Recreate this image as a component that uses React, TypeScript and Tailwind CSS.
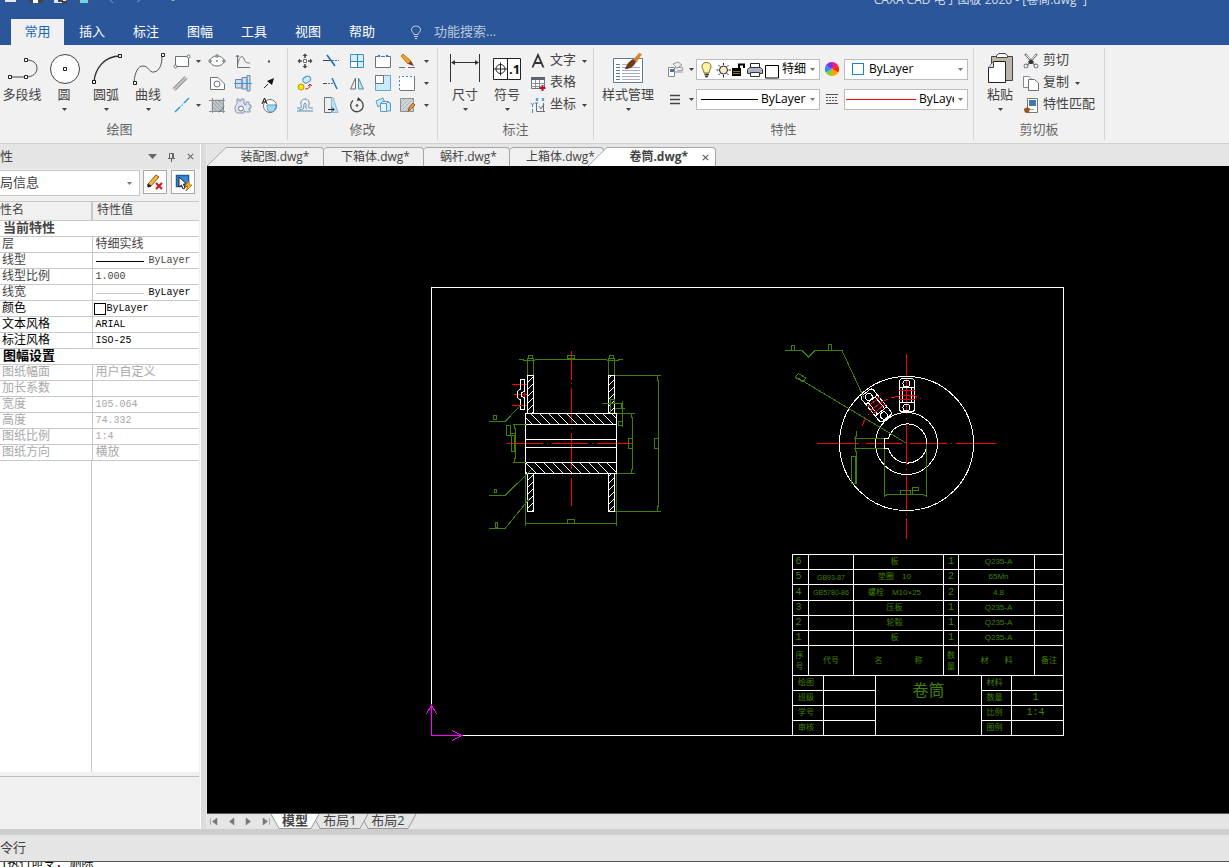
import React from "react";
import { IoCloseSharp } from "react-icons/io5";

const UI_FONT = "font-['Open_Sans','Noto_Sans_CJK_SC',sans-serif]";
const GRID_FONT = "font-['Liberation_Mono','Noto_Sans_CJK_SC',monospace]";

type IconProps = { size?: number; children: React.ReactNode };

function Icon({ size = 20, children }: IconProps) {
  return (
    <svg width={size} height={size} viewBox={`0 0 ${size} ${size}`} fill="none" stroke="#6b7178" className="block shrink-0" aria-hidden="true">
      {children}
    </svg>
  );
}

function Caret({ color = "#444" }: { color?: string }) {
  return (
    <svg width="5" height="3" viewBox="0 0 5 3" className="block shrink-0" aria-hidden="true">
      <path d="M0 0H5L2.500 3Z" fill={color} />
    </svg>
  );
}

/* ---------- title bar ---------- */

const MENUS = ["常用", "插入", "标注", "图幅", "工具", "视图", "帮助"];

function TitleBar() {
  return (
    <header className="shrink-0 bg-[#2b579a] text-white">
      <div className="flex h-[19px] items-start justify-between overflow-hidden">
        <svg width="190" height="8" viewBox="0 0 190 8" aria-hidden="true">
          <path d="M5 0H16V2H5Z" fill="#e8e8e8" />
          <path d="M29 0H43V3H31L29 1Z" fill="#444" />
          <path d="M33 0H38V3H33Z" fill="#fff" />
          <path d="M54 0H66V3H54Z" fill="#dce6f4" />
          <path d="M58 0H63V2H58ZM62 1H67V4H62Z" fill="#454545" />
          <path d="M78 0H90V2H78Z" fill="#555" />
          <path d="M80 0H88V3H80Z" fill="#6fd3f2" />
          <path d="M110 0L113 3M140 0L137 2" stroke="#7f9cc8" />
          <path d="M171 0H175L173 1Z" fill="#ccc" />
        </svg>
        <div className="mr-[142px] -mt-2.5 text-xs leading-5 text-[#d5deeb]">CAXA CAD 电子图板 2020 - [卷筒.dwg*]</div>
      </div>
      <nav className="flex h-[26px] items-stretch pl-[11px] text-[13px]">
        {MENUS.map((menu, i) => (
          <button
            key={menu}
            className={i === 0 ? "mr-px w-[53px] bg-[#f1f1f1] text-[#1b67bf]" : "w-[54px]"}
          >
            {menu}
          </button>
        ))}
        <label className="ml-[21px] flex items-center gap-3 text-[#b9c6dd]">
          <svg width="12" height="14" viewBox="0 0 12 14" fill="none" stroke="#c6d1e4" aria-hidden="true">
            <path d="M4 9.500C4 8 1.500 7 1.500 4.800C1.500 2.400 3.500 1 6 1S10.500 2.400 10.500 4.800C10.500 7 8 8 8 9.500ZM4 11.500H8M5 13.500H7" />
          </svg>
          <input aria-label="功能搜索" placeholder="功能搜索..." className="w-32 bg-transparent outline-none placeholder:text-[#b9c6dd]" />
        </label>
      </nav>
    </header>
  );
}

/* ---------- ribbon ---------- */

type BigProps = { label: string; width?: string; arrow?: boolean; children: React.ReactNode };

function BigButton({ label, width = "w-[42px]", arrow = true, children }: BigProps) {
  return (
    <button className={`flex shrink-0 flex-col items-center ${width}`}>
      {children}
      <span className="-mt-0.5 mb-1.5 whitespace-nowrap text-[13px] leading-4">{label}</span>
      {arrow && <Caret />}
    </button>
  );
}

function SmallButton({ label, width = "w-[26px]", children }: { label: string; width?: string; children: React.ReactNode }) {
  return (
    <button aria-label={label} className={`flex h-[22px] items-center justify-center ${width}`}>
      {children}
    </button>
  );
}

function TextButton({ label, arrow, children }: { label: string; arrow?: boolean; children: React.ReactNode }) {
  return (
    <button className="flex h-[22px] items-center whitespace-nowrap text-[13px]">
      {children}
      <span className="mr-1.5 ml-0.5 pb-0.5">{label}</span>
      {arrow && <Caret />}
    </button>
  );
}

type GroupProps = { title: string; width: string; titleClass?: string; children: React.ReactNode };

function Group({ title, width, titleClass = "", children }: GroupProps) {
  return (
    <section className={`my-[3px] flex shrink-0 flex-col border-r border-[#d4d4d4] ${width}`}>
      <div className="flex h-[71px] pt-0.5">{children}</div>
      <h2 className={`text-center text-[13px] leading-5 text-[#666] ${titleClass}`}>{title}</h2>
    </section>
  );
}

function DrawGroup() {
  return (
    <Group title="绘图" width="w-72" titleClass="pr-12">
      <div className="w-px" />
      <BigButton label="多段线" arrow={false}>
        <Icon size={38}>
          <path d="M8 27H23C30 27 34 23 34 18.500C34 13 30 10 23 10" stroke="#444" />
          <path d="M5.500 25.500h3v3h-3zM21.500 25.500h3v3h-3zM21.500 8.500h3v3h-3z" fill="#fff" stroke="#222" />
        </Icon>
      </BigButton>
      <BigButton label="圆">
        <Icon size={38}>
          <circle cx="20" cy="19" r="14.500" fill="#fff" stroke="#444" />
          <path d="M18.500 17.500h3v3h-3z" fill="#fff" stroke="#222" />
        </Icon>
      </BigButton>
      <BigButton label="圆弧">
        <Icon size={38}>
          <path d="M7 32C8 18 18 6 33 6" stroke="#333" strokeWidth="1.300" />
          <path d="M5.500 30.500h3v3h-3zM31.500 4.500h3v3h-3z" fill="#fff" stroke="#111" />
        </Icon>
      </BigButton>
      <BigButton label="曲线">
        <Icon size={38}>
          <path d="M5 32C6 22 9 16 14 16C20 16 20 23 25 22C31 21 33 14 33 6" stroke="#555" />
          <path d="M4.500 31.500h3v3h-3zM32.500 3.500h3v3h-3z" fill="#fff" stroke="#222" />
        </Icon>
      </BigButton>
      <div className="grid grid-cols-[34px_26px_26px_26px] content-start pl-px">
        <SmallButton label="矩形" width="w-8 gap-1">
          <Icon>
            <path d="M3.500 5.500H16.500V15.500H3.500Z" fill="#fff" />
            <circle cx="16.500" cy="5.500" r="1.500" fill="#fff" />
            <circle cx="3.500" cy="15.500" r="1.500" fill="#fff" />
          </Icon>
          <Caret />
        </SmallButton>
        <SmallButton label="椭圆">
          <Icon>
            <ellipse cx="10" cy="10" rx="7" ry="5" fill="#fff" />
            <path d="M2 9h2v2H2zM16 9h2v2h-2zM9 4h2v2H9z" fill="#fff" />
            <circle cx="10" cy="10" r=".6" />
          </Icon>
        </SmallButton>
        <SmallButton label="公式曲线">
          <Icon>
            <path d="M4.500 4V16.500H17M3 6L4.500 4L6 6M4.500 15C6 4 10 4 11 8C12 12 15 12 17 12" />
          </Icon>
        </SmallButton>
        <SmallButton label="点">
          <Icon>
            <path d="M9 9.500h2v2H9z" fill="#444" stroke="none" />
          </Icon>
        </SmallButton>
        <SmallButton label="平行线" width="w-5">
          <Icon>
            <path d="M3 15.500L15 3.500M5 17.500L17 5.500" stroke="#555" />
            <path d="M4 16.500L16 4.500" stroke="#999" />
          </Icon>
        </SmallButton>
        <SmallButton label="多边形">
          <Icon>
            <path d="M3.500 4.500H11L17.500 11V16.500H3.500Z" fill="#fff" />
            <circle cx="10" cy="11" r="3" />
          </Icon>
        </SmallButton>
        <SmallButton label="轴">
          <Icon>
            <path d="M2.500 6.500H9V15H2.500ZM9 4.500H14V16H9ZM14 2.500H17V18H14Z" fill="#cfdcec" stroke="#7088a5" />
            <path d="M1 10.500H19" stroke="#2c9be8" />
          </Icon>
        </SmallButton>
        <SmallButton label="箭头">
          <Icon>
            <path d="M5 15L9 11" stroke="#222" />
            <path d="M15 5L13 12L8 8Z" fill="#111" stroke="none" />
          </Icon>
        </SmallButton>
        <SmallButton label="构造线" width="w-8 gap-1">
          <Icon>
            <path d="M3 17L8 12M10 10.500L10.500 10M12 8L17 3" stroke="#1c9ad6" strokeWidth="1.400" />
            <path d="M8 12L12 8" stroke="#8fcdea" />
          </Icon>
          <Caret />
        </SmallButton>
        <SmallButton label="填充">
          <Icon>
            <path d="M4.500 4.500H16.500V16.500H4.500Z" fill="#bfc3c8" stroke="none" />
            <path d="M2 5.500H18M2 16.500H18M5.500 3V18M16.500 3V18" stroke="#8b9096" />
            <path d="M6 8L14 16M6 12L10 16M8 6L16 14M12 6L16 10" stroke="#a2a7ac" />
            <path d="M11 17C14 16 16 14 17 11" />
          </Icon>
        </SmallButton>
        <SmallButton label="齿轮">
          <Icon>
            <path d="M4 9V4H6V6H8V4H11V9L13 10V7H16V10H18V13H16V15H17V17H13L11 16V18H4C3 18 2 15 2 13S3 10 4 9Z" fill="#dfe5ee" stroke="#8496ac" />
            <circle cx="8" cy="13.500" r="2.500" fill="#fff" />
          </Icon>
        </SmallButton>
        <SmallButton label="图块">
          <Icon>
            <circle cx="11" cy="11" r="6.500" fill="#fff" />
            <path d="M8 10H17C17 15 14 17 12 17C9 17 8 14 8 10Z" fill="#9fdcf7" stroke="#5f8fb0" />
            <path d="M3 9L5.500 3L8 9M4 7H7" stroke="#111" />
          </Icon>
        </SmallButton>
      </div>
    </Group>
  );
}

function ModifyGroup() {
  return (
    <Group title="修改" width="w-[150px]">
      <div className="grid grid-cols-[26px_26px_26px_26px_38px] content-start pl-1">
        <SmallButton label="平移">
          <Icon>
            <path d="M8.500 8.500h3v3h-3z" fill="#fff" />
            <path d="M10 4V7M10 13V16M4 10H7M13 10H16" stroke="#444" strokeWidth="1.500" />
            <path d="M7.500 5L10 2.500L12.500 5ZM7.500 15L10 17.500L12.500 15ZM5 7.500L2.500 10L5 12.500ZM15 7.500L17.500 10L15 12.500Z" fill="#444" stroke="none" />
          </Icon>
        </SmallButton>
        <SmallButton label="裁剪">
          <Icon>
            <path d="M2 9.500H9" stroke="#444" />
            <path d="M11 9.500H18" stroke="#3a7fc4" strokeDasharray="2 1" />
            <path d="M6 4L14 15" stroke="#1f6fb5" strokeWidth="1.600" />
          </Icon>
        </SmallButton>
        <SmallButton label="阵列">
          <Icon>
            <path d="M3.500 3.500H16.500V16.500H3.500Z" fill="#d3eefb" stroke="#4a8fb8" />
            <path d="M10 10.500H4V16H10Z" fill="#fff" stroke="none" />
            <path d="M10.500 3V17M3 10.500H17" stroke="#2f86b8" />
          </Icon>
        </SmallButton>
        <SmallButton label="打断">
          <Icon>
            <path d="M5 5.500H2.500V16.500H17.500V5.500H15M8 5.500H12" fill="#fff" />
            <path d="M5 4h2v2H5zM13 4h2v2h-2z" fill="#1b7fd0" stroke="none" />
          </Icon>
        </SmallButton>
        <SmallButton label="删除" width="w-[34px] gap-[7px]">
          <Icon>
            <path d="M4 5L6 3L14 10L11 13Z" fill="#f0a030" stroke="#c87a10" />
            <path d="M11 13L14 10L17 15Z" fill="#6b3a2a" stroke="none" />
            <path d="M2 16.500H8M11 16.500H18" />
          </Icon>
          <Caret />
        </SmallButton>
        <SmallButton label="平移复制">
          <Icon>
            <rect x="8" y="3.500" width="8" height="6" rx="3" fill="#c9ebfb" stroke="#4a90bd" transform="rotate(-30 12 7)" />
            <circle cx="6" cy="14" r="3" fill="#ffe600" stroke="#b09a00" />
            <path d="M10 16C13 16 15 15 15 12M13 13L15 11L17 13" stroke="#b33" />
          </Icon>
        </SmallButton>
        <SmallButton label="延伸">
          <Icon>
            <path d="M2 10.500H6" stroke="#444" />
            <path d="M7 10.500H13" stroke="#2c7fd0" strokeDasharray="2 1" />
            <path d="M11 5L16 16" stroke="#1f6fb5" strokeWidth="1.400" />
          </Icon>
        </SmallButton>
        <SmallButton label="镜像">
          <Icon>
            <path d="M8.500 5V16H3.500Z" fill="#eee" />
            <path d="M11.500 5V16H16.500Z" fill="#bfe3f5" stroke="#5b8ba5" />
          </Icon>
        </SmallButton>
        <SmallButton label="缩放">
          <Icon>
            <path d="M2.500 2.500H17.500V17.500H2.500Z" fill="#c9ebfb" stroke="#6ca6c4" />
            <path d="M2.500 2.500H10.500V10.500H2.500Z" fill="#fff" />
          </Icon>
        </SmallButton>
        <SmallButton label="拉伸" width="w-[34px] gap-[7px]">
          <Icon>
            <path d="M3 3H17V17H3Z" fill="#fff" stroke="none" />
            <path d="M17.500 3V17.500H3" stroke="#777" />
            <path d="M2.500 17V3.500H17" stroke="#2d8fd5" strokeDasharray="2 2" />
          </Icon>
          <Caret />
        </SmallButton>
        <SmallButton label="等距线">
          <Icon>
            <path d="M2 13H5C8 13 5 9 6 7C7 3 13 3 14 7C15 9 12 13 15 13H18" stroke="#6b8aa8" />
            <path d="M2 16H18M4 15C12 15 7 9 10 8C13 9 9 13 12 14" stroke="#4f90b8" />
          </Icon>
        </SmallButton>
        <SmallButton label="拔模">
          <Icon>
            <path d="M3.500 2.500H10.500V17.500H3.500Z" fill="#eee" />
            <path d="M10.500 2.500H12L17 17.500H10.500Z" fill="#b9e2f6" stroke="#8fb9cd" />
            <path d="M7 14.500H13M11 12.500L13 14.500L11 16.500" stroke="#222" />
          </Icon>
        </SmallButton>
        <SmallButton label="旋转">
          <Icon>
            <path d="M12 4.500A6.300 6.300 0 1 1 6 5.500" stroke="#444" strokeWidth="1.300" />
            <path d="M11 2L14 5L10 6Z" fill="#333" stroke="none" />
            <circle cx="10" cy="10.500" r="1" fill="#333" />
          </Icon>
        </SmallButton>
        <SmallButton label="旋转复制">
          <Icon>
            <path d="M3 6L10 3L12 8L5 12Z" fill="#c9ebfb" stroke="#5b9dc0" />
            <path d="M12 6.500L17.500 8V16H12Z" fill="#c9ebfb" stroke="#5b9dc0" />
            <path d="M7.500 8.500H13.500V16.500H7.500ZM7.500 8.500L9.500 6.500H15.500L13.500 8.500" fill="#e6f6fd" stroke="#5b9dc0" />
          </Icon>
        </SmallButton>
        <SmallButton label="编辑填充" width="w-[34px] gap-[7px]">
          <Icon>
            <path d="M3.500 3.500H16.500V16.500H3.500Z" fill="#d2d5d8" stroke="#8b9096" />
            <path d="M4 8L8 4M4 12L12 4M4 16L16 4M8 16L16 8" stroke="#b0b4b9" />
            <path d="M16 8L18 10L13 15L11 16L12 13Z" fill="#f0a030" stroke="#8a5a20" />
          </Icon>
          <Caret />
        </SmallButton>
      </div>
    </Group>
  );
}

function AnnotateGroup() {
  return (
    <Group title="标注" width="w-[156px]">
      <div className="w-1.5" />
      <BigButton label="尺寸">
        <Icon size={38}>
          <path d="M4.500 4V32M33.500 4V32" stroke="#333" />
          <path d="M6 12.500H32" stroke="#333" />
          <path d="M5 12.500L9 10V15ZM33 12.500L29 10V15Z" fill="#333" stroke="none" />
        </Icon>
      </BigButton>
      <BigButton label="符号">
        <Icon size={38}>
          <path d="M5.500 8.500H32.500V29.500H5.500ZM19.500 8.500V29.500" fill="#fff" stroke="#222" />
          <circle cx="12.500" cy="19" r="4.500" stroke="#222" />
          <path d="M6 19H19M12.500 12.500V25.500" stroke="#222" />
          <text x="21" y="24" fontSize="13" fontWeight="700" fill="#111" stroke="none">.1</text>
        </Icon>
      </BigButton>
      <div className="flex flex-col">
        <TextButton label="文字" arrow>
          <Icon>
            <path d="M4.500 16.500L10 4L15.500 16.500M6.500 12H13.500" stroke="#333" strokeWidth="1.800" />
          </Icon>
        </TextButton>
        <TextButton label="表格">
          <Icon>
            <path d="M3.500 4.500H16.500V15.500H3.500Z" fill="#fff" />
            <path d="M3 4H17V7H3Z" fill="#5a636e" stroke="none" />
            <path d="M3 10.500H17M3 13.500H13M7.500 7V15M11.500 7V15" stroke="#8a929b" />
            <path d="M14.500 12V18M11.500 15H17.500" stroke="#b3121f" strokeWidth="2" />
          </Icon>
        </TextButton>
        <TextButton label="坐标" arrow>
          <Icon>
            <path d="M8.500 8V16.500H17M7 8H10M11 11L13 14L16 9M15.500 8V17" />
            <path d="M8 3L10 6M10 3L8 6M14 3L16 6M16 3L14 6M3 8L4.500 10V12M6 8L4.500 10M4.500 14V18" stroke="#3c8cd0" />
          </Icon>
        </TextButton>
      </div>
    </Group>
  );
}

function Combo({ label, value, children }: { label: string; value: string; children?: React.ReactNode }) {
  return (
    <label className="flex h-[21px] w-[124px] items-center border border-[#bcbcbc] bg-white text-xs text-black">
      {children}
      <select aria-label={label} className="min-w-0 flex-1 appearance-none overflow-hidden bg-transparent pl-[3px] outline-none">
        <option>{value}</option>
      </select>
      <span className="px-1">
        <Caret color="#777" />
      </span>
    </label>
  );
}

function PropertyGroup() {
  return (
    <Group title="特性" width="w-[380px]">
      <BigButton label="样式管理" width="w-[68px]">
        <Icon size={38}>
          <path d="M4.500 8.500H33.500V32.500H4.500Z" fill="#fff" stroke="#5a7d9e" />
          <path d="M7 14.500H11M7 17.500H11M7 20.500H11M7 23.500H11M7 26.500H11M7 29.500H11" stroke="#5c7fa0" />
          <path d="M13 14.500H18M13 17.500H31M13 20.500H31M13 23.500H31M13 26.500H31M13 29.500H31" stroke="#a9a9cf" />
          <path d="M24 10L30 3L33 4L27 13Z" fill="#d9822b" stroke="none" />
          <path d="M16 19C18 13 21 11 24 9L27 12C24 18 20 19 16 19Z" fill="#6b3f1d" stroke="none" />
        </Icon>
      </BigButton>
      <div className="flex flex-col gap-2 pt-2">
        <div className="flex items-center">
          <SmallButton label="图层" width="w-[34px] gap-1">
            <Icon>
              <path d="M8 5L13 3L17 6L12 9ZM10 9L17 8L18 11L12 12M10 13H18" fill="#eee" stroke="#999" />
              <path d="M3.500 8.500H9.500V17.500H3.500Z" fill="#fff" stroke="#888" />
              <path d="M5 10H9V13H5Z" fill="#3c78b4" stroke="none" />
            </Icon>
            <Caret />
          </SmallButton>
          <Combo label="当前图层" value="特细实线">
            <svg width="82" height="19" viewBox="0 0 82 19" fill="none" className="block shrink-0" aria-hidden="true">
              <path d="M7 13C7 10 5 9 5 6.500C5 4 7 2.500 9.500 2.500S14 4 14 6.500C14 9 12 10 12 13Z" fill="#fff3a8" stroke="#8a6a10" />
              <path d="M7.500 14.500H12M8 16.500H11" stroke="#333" strokeWidth="1.500" />
              <circle cx="26.500" cy="10" r="4" fill="#ffeccb" stroke="#222" />
              <path d="M26.500 3V5M26.500 15V17.500M19.500 10H21.500M31.500 10H34M21.500 5L23 6.500M31.500 5L30 6.500M21.500 15L23 13.500M31.500 15L30 13.500" stroke="#222" />
              <path d="M35 8H44V16H35Z" fill="#000" />
              <path d="M36 11.500H43M36 13.500H43" stroke="#8a7a00" />
              <path d="M42 8V4.500H47V8" stroke="#000" strokeWidth="2" />
              <path d="M53.500 8.500V3.500H62.500V8.500" fill="#fff" stroke="#222" />
              <path d="M52.500 7.500H63.500L65.500 9.500V13.500H50.500V9.500Z" fill="#aab4c4" stroke="#333" />
              <path d="M53.500 12.500H62.500V16.500H53.500Z" fill="#fff" stroke="#333" />
              <path d="M68.500 5.500H81.500V18H68.500Z" fill="#fff" stroke="#000" />
            </svg>
          </Combo>
        </div>
        <div className="flex items-center">
          <SmallButton label="线型管理" width="w-[34px] gap-1">
            <Icon>
              <path d="M5 6.500H15M5 10.500H15M5 14.500H15" stroke="#444" strokeWidth="1.500" />
            </Icon>
            <Caret />
          </SmallButton>
          <Combo label="线型" value="ByLayer">
            <span className="ml-1 h-px w-[57px] shrink-0 bg-black" />
          </Combo>
        </div>
      </div>
      <div className="flex flex-col gap-2 pt-2">
        <div className="flex items-center">
          <SmallButton label="颜色管理" width="w-6">
            <Icon size={14}>
              <g stroke="none">
                <path d="M7 7V0A7 7 0 0 1 13.100 3.500Z" fill="#e0218a" />
                <path d="M7 7L13.100 3.500A7 7 0 0 1 13.100 10.500Z" fill="#ff2a00" />
                <path d="M7 7L13.100 10.500A7 7 0 0 1 7 14Z" fill="#ffa500" />
                <path d="M7 7V14A7 7 0 0 1 0.900 10.500Z" fill="#8ed11f" />
                <path d="M7 7L0.900 10.500A7 7 0 0 1 0.900 3.500Z" fill="#2f8cff" />
                <path d="M7 7L0.900 3.500A7 7 0 0 1 7 0Z" fill="#8a2be2" />
              </g>
            </Icon>
          </SmallButton>
          <Combo label="颜色" value="ByLayer">
            <span className="mr-0.5 ml-[7px] size-3 shrink-0 border border-[#1b7fd8] bg-white" />
          </Combo>
        </div>
        <div className="flex items-center">
          <SmallButton label="线宽管理" width="w-6">
            <Icon size={14}>
              <path d="M1 2.500H13M1 11.500H13" stroke="#555" />
              <path d="M1 5.500H13M1 8.500H13" stroke="#555" strokeDasharray="2 1" />
            </Icon>
          </SmallButton>
          <Combo label="线宽" value="ByLayer">
            <span className="ml-px h-px w-[70px] shrink-0 bg-[#f00]" />
          </Combo>
        </div>
      </div>
    </Group>
  );
}

function ClipboardGroup() {
  return (
    <Group title="剪切板" width="w-[131px]">
      <div className="w-[5px]" />
      <BigButton label="粘贴">
        <Icon size={38}>
          <path d="M10.500 6.500H31.500V30.500H10.500Z" fill="#bcb4a8" stroke="#444" />
          <path d="M15.500 7.500V5.500L18 3.500H24L26.500 5.500V7.500Z" fill="#fff" stroke="#444" />
          <path d="M12.500 11.500H24.500V32.500H7.500V17.500Z" fill="#fff" stroke="#222" />
          <path d="M12.500 11.500V17.500H7.500" fill="#cfe3f5" stroke="#444" />
        </Icon>
      </BigButton>
      <div className="flex flex-col">
        <TextButton label="剪切">
          <Icon>
            <path d="M4 3L14 14M16 3L6 14" stroke="#777" strokeWidth="2" />
            <path d="M5 4L14 13M15 4L6 13" stroke="#eee" />
            <path d="M7 11L10 8L13 11L11 13H9Z" fill="#333" stroke="none" />
            <circle cx="5" cy="15" r="2" />
            <circle cx="15" cy="15" r="2" />
          </Icon>
        </TextButton>
        <TextButton label="复制" arrow>
          <Icon>
            <path d="M2.500 3.500H8L10.500 6V14.500H2.500Z" fill="#fff" stroke="#888" />
            <path d="M7.500 6.500H13.500L17.500 10V17.500H7.500Z" fill="#fff" />
          </Icon>
        </TextButton>
        <TextButton label="特性匹配">
          <Icon>
            <path d="M6.500 3.500H16.500V17.500H6.500Z" fill="#fff" stroke="#777" />
            <path d="M8 5H15V11H8Z" fill="#4279b5" stroke="none" />
            <path d="M9 14.500H13" stroke="#999" />
            <path d="M3 14C5 12 8 12 9 14L8 17C6 19 3 18 3 14Z" fill="#9a5318" stroke="none" />
          </Icon>
        </TextButton>
      </div>
    </Group>
  );
}

/* ---------- property panel ---------- */

type Row = { name: string; value?: React.ReactNode; tone: string; head?: boolean };

const DIM = "text-[#444]";
const ON = "text-black";
const OFF = "text-[#a8a8a8]";

const ROWS: Row[] = [
  { name: "当前特性", tone: DIM, head: true },
  { name: "层", value: "特细实线", tone: DIM },
  { name: "线型", value: <LineSample line="bg-black" />, tone: DIM },
  { name: "线型比例", value: "1.000", tone: DIM },
  { name: "线宽", value: <LineSample line="bg-[#c8c8c8]" text="text-black" />, tone: DIM },
  {
    name: "颜色",
    value: (
      <span className="-ml-0.5 flex items-center gap-px">
        <i className="size-3 border border-black" />
        ByLayer
      </span>
    ),
    tone: ON,
  },
  { name: "文本风格", value: "ARIAL", tone: ON },
  { name: "标注风格", value: "ISO-25", tone: ON },
  { name: "图幅设置", tone: ON, head: true },
  { name: "图纸幅面", value: "用户自定义", tone: OFF },
  { name: "加长系数", value: "", tone: OFF },
  { name: "宽度", value: "105.064", tone: OFF },
  { name: "高度", value: "74.332", tone: OFF },
  { name: "图纸比例", value: "1:4", tone: OFF },
  { name: "图纸方向", value: "横放", tone: OFF },
];

function LineSample({ line, text = "" }: { line: string; text?: string }) {
  return (
    <span className={`flex items-center gap-[5px] ${text}`}>
      <i className={`h-px w-12 ${line}`} />
      ByLayer
    </span>
  );
}

function PropertyPanel() {
  return (
    <aside className="flex w-[201px] shrink-0 flex-col border-r border-white bg-[#f0f0f0]">
      <div className="flex h-[25px] shrink-0 items-center bg-[#e5e5e5] text-[13px] text-[#444]">
        <h2 className="flex-1">性</h2>
        <button aria-label="菜单" className="mr-[10px]">
          <svg width="9" height="5" viewBox="0 0 9 5" className="block" aria-hidden="true">
            <path d="M0 0H9L4.500 5Z" fill="#666" />
          </svg>
        </button>
        <button aria-label="固定" className="mr-[9px]">
          <svg width="9" height="10" viewBox="0 0 9 10" fill="none" stroke="#666" className="block" aria-hidden="true">
            <path d="M2.500 6V1.500H6.500V6M5.500 1V6M1 6.500H8M4.500 7V10" />
          </svg>
        </button>
        <button aria-label="关闭" className="mr-1 text-[11px] text-[#666]">
          <IoCloseSharp />
        </button>
      </div>
      <div className="flex h-8 shrink-0 items-start gap-[3px] pt-px">
        <label className="flex h-[26px] w-[140px] items-center border border-l-0 border-[#c6c6c6] bg-white text-[13px] text-[#444]">
          <select aria-label="选择" className="min-w-0 flex-1 appearance-none bg-transparent outline-none">
            <option>局信息</option>
          </select>
          <span className="px-[7px]">
            <Caret color="#777" />
          </span>
        </label>
        <button aria-label="清除选择" className="flex size-6 items-center justify-center border border-[#a8a8a8] bg-white">
          <Icon>
            <path d="M3 12L11 3L14 5L6 14L3 15Z" fill="#f5b83d" stroke="#8a5a10" />
            <path d="M3 12L6 14L3 15Z" fill="#222" stroke="#222" />
            <path d="M11 11L17 17M17 11L11 17" stroke="#d01818" strokeWidth="2" />
          </Icon>
        </button>
        <button aria-label="快速选择" className="ml-px flex size-6 items-center justify-center border border-[#a8a8a8] bg-white">
          <Icon>
            <path d="M3.500 3.500H15.500V14.500H3.500Z" fill="#3c8ad8" stroke="#1f5c9c" strokeWidth="1.500" />
            <path d="M6 5V15L8.500 13L10 17L12 16L10.500 12H13.500Z" fill="#fff" stroke="#222" />
            <path d="M16 9L12 14H15L13 19L19 13H16Z" fill="#ffc02e" stroke="#c87a10" />
          </Icon>
        </button>
      </div>
      <div className={`mr-px flex min-h-0 flex-1 flex-col overflow-hidden border-t border-[#c8c8c8] bg-white text-xs ${GRID_FONT}`}>
        <table className="w-full table-fixed border-collapse leading-none">
          <thead>
            <tr className="h-[18px] border-b border-[#c8c8c8] bg-[#f0f0f0] text-left text-[#444]">
              <th className="w-[92px] border-r-2 border-[#c8c8c8] p-0 font-normal">性名</th>
              <th className="p-0 pl-1 font-normal">特性值</th>
            </tr>
          </thead>
          <tbody>
            {ROWS.map((row) => (
              <tr key={row.name} className={`h-4 border-b border-[#c8c8c8] ${row.tone}`}>
                {row.head ? (
                  <th colSpan={2} className="p-0 pl-[3px] text-left text-[13px] leading-none font-bold">
                    {row.name}
                  </th>
                ) : (
                  <>
                    <td className="border-r border-[#c8c8c8] p-0 pt-0.5 pl-0.5 whitespace-nowrap">{row.name}</td>
                    <td className="p-0 pt-0.5 pl-[3px] whitespace-nowrap">
                      {typeof row.value === "string" && /[一-龥]/.test(row.value) ? row.value : <span className="block text-[10px] leading-3">{row.value}</span>}
                    </td>
                  </>
                )}
              </tr>
            ))}
          </tbody>
        </table>
        <div className="w-[92px] flex-1 border-r border-[#c8c8c8]" />
      </div>
      <div className="mt-1 mr-px h-[53px] shrink-0 border-t border-[#bdbdbd]" />
    </aside>
  );
}

/* ---------- drawing ---------- */

const GREEN = "#408000";

// both lugs are the same part, the second one is turned round the drum centre
function Lug() {
  return (
    <>
      <rect x="899.500" y="378.500" width="15" height="33" rx="3" />
      <path d="M902.500 387V402M911.500 387V402M899 387.500H915M899 402.500H915" />
      <circle cx="906.500" cy="383.500" r="3.500" />
      <circle cx="906.500" cy="407.500" r="3.500" />
      <path d="M899 390.500H915M899 395.500H915M899 399.500H915" stroke="red" />
    </>
  );
}

function Drawing() {
  return (
    <svg width="1022" height="647" viewBox="207 166 1022 647" fill="none" stroke="#fff" shapeRendering="crispEdges" className="block" role="img" aria-label="卷筒">
      <defs>
        <pattern id="hatchHub" width="9" height="9" patternUnits="userSpaceOnUse">
          <path d="M0 0L9 9M-1 8L1 10M8 -1L10 1" stroke="#fff" />
        </pattern>
        <pattern id="hatchFlange" width="7" height="7" patternUnits="userSpaceOnUse">
          <path d="M0 7L7 0M-1 1L1 -1M6 8L8 6" stroke="#fff" />
        </pattern>
      </defs>

      <path d="M431.500 705V287.500H1063.500V735.500H463" />
      <g stroke="#f0f">
        <path d="M431.500 706V735.500H463" />
        <path d="M426.500 714L431.500 705L436.500 714M452 730.500L462 735.500L452 740.500" />
      </g>

      {/* drum section, centre lines */}
      <g stroke="red">
        <path d="M507 443.500H543M547 443.500H548M552 443.500H588M592 443.500H593M597 443.500H632" />
        <path d="M571.500 351V380M571.500 383V384M571.500 388V423M571.500 428V429M571.500 433V469M571.500 474V475M571.500 478V506" />
      </g>
      <path d="M527.500 375.500H533.500V413H527.500ZM608.500 375.500H614.500V413H608.500ZM527.500 473.500H533.500V511.500H527.500ZM608.500 473.500H614.500V511.500H608.500Z" fill="url(#hatchFlange)" />
      <path d="M525.500 413.500H616.500V424.500H525.500ZM525.500 462.500H616.500V473.500H525.500Z" fill="url(#hatchHub)" />
      <path d="M525.500 424V462M616.500 424V462M525.500 439.500H616.500M525.500 447.500H616.500" />

      {/* clamp on the left flange */}
      <path d="M512 384.500H527M512 405.500H527M514 394.500H527M524.500 390V400" stroke="red" />
      <path d="M520.500 389V379.500H524.500V391L521.500 393V396L524.500 398V409.500H520.500V400L517.500 397.500V391.500L520.500 389" />

      {/* drum section, dimensions */}
      <g stroke={GREEN}>
        <path d="M519 359.500H523L524 360.500H533L537 359.500H605L609 360.500H618L619 359.500H623" />
        <path d="M567.500 355.500H574.500V358.500H567.500ZM528.500 355.500H532.500V358.500H528.500ZM609.500 355.500H613.500V358.500H609.500Z" />
        <path d="M527.500 358V375M533.500 358V375M608.500 358V375M614.500 358V375" />
        <path d="M615 375.500H661M615 511.500H661M657.500 376V380L658.500 381V506L657.500 507V511M654.500 438.500H658.500V448.500H654.500Z" />
        <path d="M617 413.500H635M617 473.500H635M631.500 414V417L632.500 418V469L631.500 470V473M628.500 438.500H632.500V448.500H628.500Z" />
        <path d="M602 403.500H623M615 408.500H625M622.500 401V427M621.500 403V409M610.500 413V399.500H614.500V403M618.500 421.500H622.500V425.500H618.500Z" />
        <path d="M513 424.500H526M513 462.500H526M514.500 424V428L515.500 429V458L514.500 459V462M506.500 425.500H510.500V435.500H506.500ZM511.500 435.500H514.500V451.500H511.500ZM511 433.500H515" />
        <path d="M525.500 474V526M616.500 474V526M526 523.500H616M567.500 519.500H574.500V523M567.500 523V519" />
        <path d="M489 421.500H505L521 405M493.500 415.500H496.500V419.500H493.500Z" />
        <path d="M489 495.500H505L533 468M494.500 489.500H496.500V492.500H494.500Z" />
        <path d="M489 528.500H505L530 498M495.500 522.500H497.500V527.500H495.500Z" />
      </g>

      {/* drum end view */}
      <g stroke="red">
        <path d="M817 443.500H859M862 443.500H863M866 443.500H902M910 443.500H947M951 443.500H952M956 443.500H996" />
        <path d="M906.500 354V375M906.500 379V414M906.500 418V419M906.500 423V465M906.500 469V470M906.500 473V510M906.500 514V515M906.500 518V539" />
        <path d="M862 426A48 48 0 0 1 888 399M891 398A48 48 0 0 1 923 399" strokeDasharray="9 3 2 3" />
      </g>
      <circle cx="906.500" cy="443.500" r="67" />
      <circle cx="906.500" cy="443.500" r="31" />
      <path d="M888.500 438.500H884.500V448.500H888.500A19.500 19.500 0 1 0 888.500 438.500" />
      <Lug />
      <g transform="rotate(-39 906.500 443.500)">
        <Lug />
      </g>
      <g stroke={GREEN}>
        <path d="M785 350.500H802L808.500 357L815 350.500H842L864 398M791.500 345.500H794.500V350M791.500 350V345M828.500 344.500H831.500V350M828.500 350V344" />
        <path d="M798 378L906 443M798.500 373.500L805.500 378L803 382L795 377Z" />
        <path d="M854 438.500H884M854 448.500H884M856.500 431V436L855.500 437V451L856.500 452V484M851.500 456.500H855.500V483.500H851.500Z" />
        <path d="M884.500 449V497M926.500 444V497M885 495.500L888 494.500H922L926 495.500M900.500 490.500H910.500V494M900.500 494V490M912.500 494V487.500H918.500V490.500H912.500" />
      </g>
    </svg>
  );
}

const PARTS = [
  ["6", "", "板", "1", "Q235-A"],
  ["5", "GB93-87", "垫圈　10", "2", "65Mn"],
  ["4", "GB5780-86", "螺栓　M10×25", "2", "4.8"],
  ["3", "", "压板", "1", "Q235-A"],
  ["2", "", "轮毂", "1", "Q235-A"],
  ["1", "", "板", "1", "Q235-A"],
];

const CELL = "border border-white p-0 font-normal";
const DIGIT = "text-[10px] font-['Liberation_Mono',monospace]";

function TitleBlock() {
  return (
    <div className="absolute top-[388px] left-[585px] w-[272px] text-center text-[8px] leading-none text-[#408000] font-['Liberation_Sans','Noto_Sans_CJK_SC',sans-serif]">
      <table className="w-full table-fixed border-collapse">
        <colgroup>
          <col className="w-4" />
          <col className="w-[45px]" />
          <col className="w-[90px]" />
          <col className="w-[15px]" />
          <col className="w-[76px]" />
          <col />
        </colgroup>
        <tbody>
          {PARTS.map(([no, code, name, count, material]) => (
            <tr key={no} className={no === "4" ? "h-4" : "h-[15px]"}>
              <td className={`${CELL} ${DIGIT} pr-1`}>{no}</td>
              <td className={`${CELL} text-[7px] whitespace-nowrap`}>{code}</td>
              <td className={`${CELL} pr-2 whitespace-nowrap`}>{name}</td>
              <td className={`${CELL} ${DIGIT}`}>{count}</td>
              <td className={`${CELL} pl-1`}>{material}</td>
              <td className={CELL} />
            </tr>
          ))}
          <tr className="h-[30px]">
            <th className={`${CELL} pr-0.5 leading-[11px]`}>序号</th>
            <th className={CELL}>代号</th>
            <th className={CELL}>名　　　　称</th>
            <th className={`${CELL} leading-[11px]`}>数量</th>
            <th className={CELL}>材　　料</th>
            <th className={CELL}>备注</th>
          </tr>
        </tbody>
      </table>
      <table className="-mt-px w-full table-fixed border-collapse">
        <colgroup>
          <col className="w-[31px]" />
          <col className="w-[52px]" />
          <col className="w-[106px]" />
          <col className="w-[30px]" />
          <col />
        </colgroup>
        <tbody>
          <tr className="h-[15px]">
            <th className={`${CELL} pr-1`}>绘图</th>
            <td className={CELL} />
            <td rowSpan={2} className={`${CELL} text-base leading-none`}>卷筒</td>
            <th className={`${CELL} pr-1`}>材料</th>
            <td className={CELL} />
          </tr>
          <tr className="h-[15px]">
            <th className={`${CELL} pr-1`}>班级</th>
            <td className={CELL} />
            <th className={`${CELL} pr-1`}>数量</th>
            <td className={`${CELL} ${DIGIT} pr-1`}>1</td>
          </tr>
          <tr className="h-[15px]">
            <th className={`${CELL} pr-1`}>学号</th>
            <td className={CELL} />
            <td rowSpan={2} className={CELL} />
            <th className={`${CELL} pr-1`}>比例</th>
            <td className={`${CELL} ${DIGIT} pr-1`}>1:4</td>
          </tr>
          <tr className="h-[15px]">
            <th className={`${CELL} pr-1`}>审核</th>
            <td className={CELL} />
            <th className={`${CELL} pr-1`}>图例</th>
            <td className={CELL} />
          </tr>
        </tbody>
      </table>
    </div>
  );
}

/* ---------- document area ---------- */

const TAB = "flex h-[19px] items-center justify-center rounded-t border border-b-0 border-l-0 border-[#a5a5a5] bg-[#f0f0f0]";

function FileTabs() {
  return (
    <div className="flex h-[22px] shrink-0 items-end overflow-hidden text-xs text-[#444]">
      <div className="flex items-end">
        <svg width="20" height="19" viewBox="0 0 20 19" className="block" aria-hidden="true">
          <path d="M0 19L19 0.500H20V19Z" fill="#f0f0f0" />
          <path d="M0 19L19 0.500H20" fill="none" stroke="#a5a5a5" />
        </svg>
        <button className={`${TAB} w-[97px] rounded-tl-none`}>装配图.dwg*</button>
      </div>
      <button className={`${TAB} w-[100px] pl-1`}>下箱体.dwg*</button>
      <button className={`${TAB} w-[86px] pl-1`}>蜗杆.dwg*</button>
      <button className={`${TAB} w-[94px] pl-2`}>上箱体.dwg*</button>
      <div className="-ml-4 flex items-end">
        <svg width="20" height="19" viewBox="0 0 20 19" className="block" aria-hidden="true">
          <path d="M0 19L19 0.500H20V19Z" fill="#fff" />
          <path d="M0 19L19 0.500H20" fill="none" stroke="#a5a5a5" />
        </svg>
        <div className="flex h-[19px] w-[108px] items-center justify-end rounded-tr border-t border-r border-[#a5a5a5] bg-white">
          <button className="mr-3 font-bold">卷筒.dwg*</button>
          <button aria-label="关闭" className="mr-1 text-[11px] text-[#555]">
            <IoCloseSharp />
          </button>
        </div>
      </div>
    </div>
  );
}

const STEPS = [
  { label: "第一个", d: "M1.500 1V8M8 1L3.500 4.500L8 8Z" },
  { label: "上一个", d: "M7 1L2.500 4.500L7 8Z" },
  { label: "下一个", d: "M2 1L6.500 4.500L2 8Z" },
  { label: "最后一个", d: "M1 1L5.500 4.500L1 8ZM7.500 1V8" },
];

function SheetTabs() {
  return (
    <div className="flex h-4 shrink-0 overflow-hidden border-t border-[#555] text-[13px] leading-3 text-[#444]">
      <div className="flex w-16 justify-between pl-0.5">
        {STEPS.map((step) => (
          <button key={step.label} aria-label={step.label}>
            <svg width="9" height="9" viewBox="0 0 9 9" fill="#777" stroke="#777" strokeWidth=".5" className="block" aria-hidden="true">
              <path d={step.d} />
            </svg>
          </button>
        ))}
      </div>
      <button className="relative w-12 pb-[3px] font-bold">
        <svg width="48" height="15" viewBox="0 0 48 15" className="absolute inset-0" aria-hidden="true">
          <path d="M0 0L8 14.500H40L48 0" fill="#fff" stroke="#999" />
        </svg>
        <span className="relative">模型</span>
      </button>
      <div className="-ml-[3px] flex">
        {["布局1", "布局2"].map((sheet) => (
          <button key={sheet} className="relative w-12 pb-[3px]">
            <svg width="56" height="15" viewBox="0 0 56 15" fill="none" className="absolute inset-0" aria-hidden="true">
              <path d="M0 7L4 14.500H44L52 0" stroke="#999" />
            </svg>
            <span className="relative">{sheet}</span>
          </button>
        ))}
      </div>
    </div>
  );
}

export default function App() {
  return (
    <div className={`flex h-screen flex-col overflow-hidden bg-[#e5e5e5] text-[#444] ${UI_FONT}`}>
      <TitleBar />
      <div className="flex h-[99px] shrink-0 overflow-hidden border-b border-[#d0d0d0] bg-[#f1f1f1]">
        <DrawGroup />
        <ModifyGroup />
        <AnnotateGroup />
        <PropertyGroup />
        <ClipboardGroup />
      </div>
      <main className="flex min-h-0 flex-1">
        <PropertyPanel />
        <div className="w-1.5 shrink-0 border-x border-r-[#e8e8e8] border-l-[#d8d8d8] bg-[#dcdcdc]" />
        <div className="flex min-w-0 flex-1 flex-col">
          <FileTabs />
          <div className="relative min-h-0 flex-1 overflow-hidden bg-black">
            <Drawing />
            <TitleBlock />
          </div>
          <SheetTabs />
        </div>
      </main>
      <footer className="shrink-0">
        <div className="h-1.5 bg-[#cdcdcd]" />
        <h2 className="h-[27px] border-b border-[#555] text-[13px] leading-[25px]">令行</h2>
        <div className="h-[5px] overflow-hidden bg-white text-black">
          <pre className={`-mt-1.5 text-xs leading-4 ${GRID_FONT}`}>]执行命令: 删除</pre>
        </div>
      </footer>
    </div>
  );
}
